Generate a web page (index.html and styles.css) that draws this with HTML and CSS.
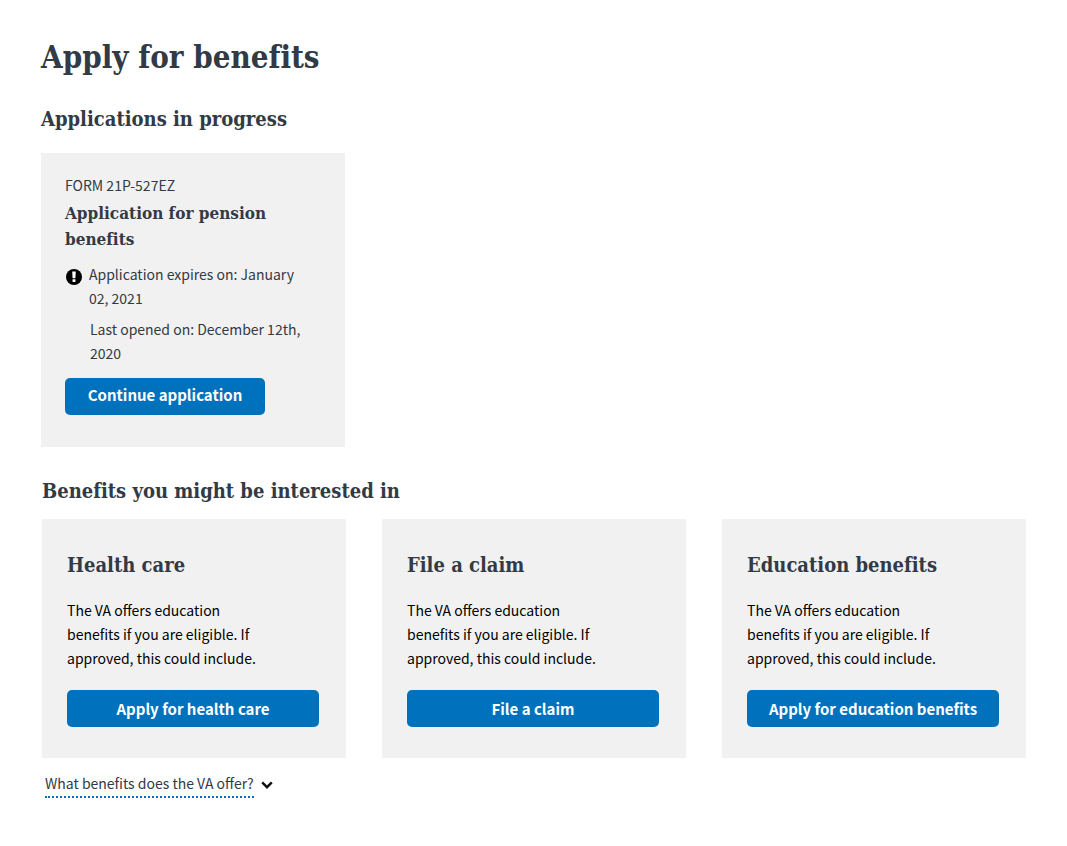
FILE: index.html
```
<!DOCTYPE html>
<html lang="en">
<head>
<meta charset="utf-8">
<meta name="viewport" content="width=device-width, initial-scale=1">
<title>Apply for benefits</title>
<link rel="stylesheet" href="styles.css">
</head>
<body>
<main class="page">
  <h1 class="page-title">Apply for benefits</h1>

  <section class="progress">
    <h2 class="section-title">Applications in progress</h2>
    <div class="card-grid">
      <article class="card form-card">
        <p class="form-number">FORM 21P-527EZ</p>
        <h3 class="form-title">Application for pension benefits</h3>
        <div class="status">
          <svg class="status-icon" viewBox="0 0 16 16" aria-hidden="true">
            <circle cx="8" cy="8" r="8" fill="#000"/>
            <path d="M6.2 2.6h3.6l-.4 6.6H6.6z" fill="#fff"/>
            <rect x="6.5" y="10.3" width="3" height="2.7" rx=".4" fill="#fff"/>
          </svg>
          <p class="status-text">Application expires on: January 02, 2021</p>
          <p class="status-text status-opened">Last opened on: December 12th, 2020</p>
        </div>
        <button type="button" class="button button-continue">Continue application</button>
      </article>
    </div>
  </section>

  <section class="benefits">
    <h2 class="section-title">Benefits you might be interested in</h2>
    <div class="card-grid">
      <article class="card benefit-card">
        <h3 class="benefit-title">Health care</h3>
        <p class="benefit-text">The VA offers education benefits if you are eligible. If approved, this could include.</p>
        <button type="button" class="button">Apply for health care</button>
      </article>
      <article class="card benefit-card">
        <h3 class="benefit-title">File a claim</h3>
        <p class="benefit-text">The VA offers education benefits if you are eligible. If approved, this could include.</p>
        <button type="button" class="button">File a claim</button>
      </article>
      <article class="card benefit-card">
        <h3 class="benefit-title">Education benefits</h3>
        <p class="benefit-text">The VA offers education benefits if you are eligible. If approved, this could include.</p>
        <button type="button" class="button">Apply for education benefits</button>
      </article>
    </div>
    <button type="button" class="more" aria-expanded="false">
      <span class="more-label">What benefits does the VA offer?</span>
      <svg class="more-icon" viewBox="0 0 12 8" aria-hidden="true">
        <path d="M1.2 1.4 6 6.2l4.8-4.8" fill="none" stroke="#111" stroke-width="2.4"/>
      </svg>
    </button>
  </section>
</main>
</body>
</html>
```
FILE: styles.css
```
* {
  box-sizing: border-box;
}

body {
  margin: 0;
  background: #fff;
  color: #323a45;
  font-family: "Noto Sans CJK SC", "Open Sans", sans-serif;
  font-size: 14px;
  line-height: 24px;
}

h1, h2, h3, p {
  margin: 0;
}

h1, h2, h3 {
  font-family: "DejaVu Serif Condensed", "DejaVu Serif", serif;
  font-weight: 700;
  font-variant-ligatures: none;
}

.page {
  padding: 37px 41px;
}

.page-title {
  font-size: 31px;
  line-height: 40px;
}

.section-title {
  font-size: 20px;
  line-height: 28px;
}

.progress {
  margin-top: 28px;
}

.progress .card-grid {
  margin-top: 20px;
}

.benefits {
  margin-top: 30px;
  padding-left: 1px;
}

.benefits .card-grid {
  margin-top: 14px;
}

.card-grid {
  display: grid;
  grid-template-columns: repeat(auto-fill, minmax(280px, 1fr));
  gap: 36px;
}

.card {
  background: #f1f1f1;
}

.form-card {
  padding: 20px 24px 32px;
}

.form-title {
  font-size: 17px;
  line-height: 26px;
  margin-top: 3px;
}

.status {
  display: grid;
  grid-template-columns: 16px 1fr;
  column-gap: 8px;
  row-gap: 7px;
  margin-top: 10px;
}

.status-icon {
  width: 16px;
  height: 16px;
  margin: 7px 0 0 1px;
}

.status-text {
  max-width: 220px;
}

.status-opened {
  grid-column: 2;
  padding-left: 1px;
}

.button {
  display: block;
  width: 100%;
  min-height: 37px;
  padding: 6px 12px;
  border: 0;
  border-radius: 5px;
  background: #0071bc;
  color: #fff;
  font: inherit;
  font-size: 15px;
  font-weight: 700;
  cursor: pointer;
}

.button-continue {
  width: 200px;
  margin-top: 13px;
  padding-top: 5px;
  padding-bottom: 8px;
}

.benefit-card {
  padding: 32px 27px 31px 25px;
}

.benefit-title {
  font-size: 20px;
  line-height: 28px;
}

.benefit-text {
  max-width: 200px;
  margin: 19px 0 20px;
  color: #000;
}

.more {
  display: inline-flex;
  align-items: center;
  gap: 7px;
  margin: 13px 0 0 3px;
  padding: 0;
  border: 0;
  background: none;
  color: inherit;
  font: inherit;
  cursor: pointer;
}

.more-label {
  padding-bottom: 1px;
  border-bottom: 2px dotted #0071bc;
}

.more-icon {
  width: 12px;
  height: 8px;
}
```
